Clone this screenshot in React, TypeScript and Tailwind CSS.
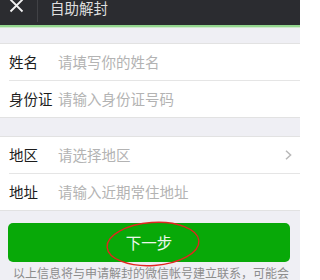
import React from "react";

function Row({ label, placeholder, chevron }: { label: string; placeholder: string; chevron?: boolean }) {
  return (
    <div className="flex h-[36px] items-center pl-[9px] pr-[8px]">
      <div className="w-[49px] shrink-0 whitespace-nowrap text-[14.5px] leading-none text-[#1c1c1c]">{label}</div>
      <div className="flex-1 whitespace-nowrap text-[14.5px] leading-none text-[#b3b3b3]">{placeholder}</div>
      {chevron && (
        <svg width="7" height="10" viewBox="0 0 7 10" className="shrink-0">
          <path d="M1 0.8 L5.6 5 L1 9.2" fill="none" stroke="#b8b8b8" strokeWidth="1.5" />
        </svg>
      )}
    </div>
  );
}

export default function App() {
  return (
    <div
      className="relative h-[280px] w-[300px] overflow-hidden bg-[#efeff4]"
      style={{ fontFamily: '"Noto Sans CJK SC", "Noto Sans", sans-serif' }}
    >
      <div className="flex h-[25px] items-start bg-[#2b2c30]">
        <svg width="15" height="14" viewBox="0 0 15 14" className="ml-[9px] mt-[-1px]">
          <path d="M1.5 0.5 L13.5 12.5 M13.5 0.5 L1.5 12.5" stroke="#f2f2f2" strokeWidth="1.8" />
        </svg>
        <div className="ml-[13px] h-[22px] w-px bg-[#414246]" />
        <div className="ml-[12px] mt-0 whitespace-nowrap text-[14.5px] leading-[15px] text-[#dedede]">自助解封</div>
      </div>
      <div className="h-[2px] bg-[#93d68e]" />
      <div className="h-px bg-[#cfe9cc]" />

      <div className="mt-[15px] border-y border-[#e2e2e2] bg-white">
        <Row label="姓名" placeholder="请填写你的姓名" />
        <div className="ml-[9px] h-px bg-[#e5e5e5]" />
        <Row label="身份证" placeholder="请输入身份证号码" />
      </div>

      <div className="mt-[18px] border-y border-[#e2e2e2] bg-white">
        <Row label="地区" placeholder="请选择地区" chevron />
        <div className="ml-[9px] h-px bg-[#e5e5e5]" />
        <Row label="地址" placeholder="请输入近期常住地址" />
      </div>

      <div className="ml-[8px] mt-[12px] flex h-[39px] w-[282px] items-center justify-center rounded-[5px] bg-[#08a908]">
        <span className="text-[15.5px] leading-none text-[#eef8ee]">下一步</span>
      </div>

      <div className="mt-[3px] whitespace-nowrap pl-[13px] text-[12px] leading-[16px] text-[#8c8c8c]">
        以上信息将与申请解封的微信帐号建立联系，可能会
      </div>

      <svg
        width="100"
        height="52"
        viewBox="0 0 100 52"
        className="absolute left-[103px] top-[218px]"
      >
        <ellipse cx="50" cy="26" rx="46" ry="21.5" fill="none" stroke="#e3251f" strokeWidth="1.4" transform="rotate(-4 50 26)" />
      </svg>
    </div>
  );
}
